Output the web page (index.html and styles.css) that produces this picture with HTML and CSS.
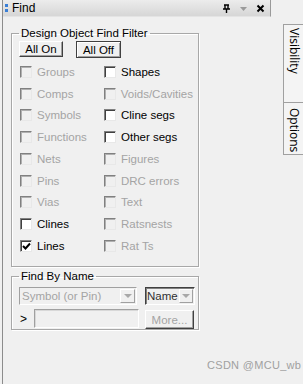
FILE: index.html
```html
<!DOCTYPE html>
<html lang="en">
<head>
    <meta charset="UTF-8">
    <title>Find</title>
    <link rel="stylesheet" href="styles.css">
</head>
<body>

    <div class="window">

        <!-- Find panel -->
        <div class="panel">

            <div class="titlebar">
                <span class="dots"><i></i><i></i></span>
                <span class="title">Find</span>
                <span class="tools">
                    <svg width="9" height="9" viewBox="0 0 9 9"><path d="M2 1h5M3 1v4M6 1v4M1 5h7M4.5 5v4" stroke="#000" stroke-width="1.4" fill="none"/></svg>
                    <svg width="9" height="9" viewBox="0 0 9 9"><path d="M1 3h7L4.5 7z" fill="#9a9a9a"/></svg>
                    <svg width="9" height="9" viewBox="0 0 9 9"><path d="M1.5 1.5l6 6M7.5 1.5l-6 6" stroke="#000" stroke-width="2"/></svg>
                </span>
            </div>

            <fieldset class="group filter">
                <legend>Design Object Find Filter</legend>

                <div class="buttons">
                    <button class="btn">All On</button>
                    <button class="btn pressed">All Off</button>
                </div>

                <div class="checks">
                    <label class="check off"><span class="box"></span>Groups</label>
                    <label class="check"><span class="box"></span>Shapes</label>
                    <label class="check off"><span class="box"></span>Comps</label>
                    <label class="check off"><span class="box"></span>Voids/Cavities</label>
                    <label class="check off"><span class="box"></span>Symbols</label>
                    <label class="check"><span class="box"></span>Cline segs</label>
                    <label class="check off"><span class="box"></span>Functions</label>
                    <label class="check"><span class="box"></span>Other segs</label>
                    <label class="check off"><span class="box"></span>Nets</label>
                    <label class="check off"><span class="box"></span>Figures</label>
                    <label class="check off"><span class="box"></span>Pins</label>
                    <label class="check off"><span class="box"></span>DRC errors</label>
                    <label class="check off"><span class="box"></span>Vias</label>
                    <label class="check off"><span class="box"></span>Text</label>
                    <label class="check"><span class="box"></span>Clines</label>
                    <label class="check off"><span class="box"></span>Ratsnests</label>
                    <label class="check"><span class="box ticked"><svg width="9" height="9" viewBox="0 0 9 9"><path d="M1 4l2.5 2.5L8 1.5" stroke="#000" stroke-width="2" fill="none"/></svg></span>Lines</label>
                    <label class="check off"><span class="box"></span>Rat Ts</label>
                </div>
            </fieldset>

            <fieldset class="group byname">
                <legend>Find By Name</legend>

                <div class="row">
                    <div class="combo wide">
                        <span class="value">Symbol (or Pin)</span>
                        <span class="arrow"></span>
                    </div>
                    <div class="combo narrow active">
                        <span class="value">Name</span>
                        <span class="arrow"></span>
                    </div>
                </div>

                <div class="row">
                    <span class="prompt">&gt;</span>
                    <div class="entry"></div>
                    <button class="btn more">More...</button>
                </div>
            </fieldset>

        </div>

        <!-- Side tabs -->
        <div class="tabs">
            <div class="tab visibility">Visibility</div>
            <div class="tab options">Options</div>
        </div>

    </div>

    <div class="watermark">CSDN @MCU_wb</div>

</body>
</html>
```

FILE: styles.css
```css
/* General look of the Find panel */

body {
    margin: 0;
    background-color: #f0f0f0;
    font-family: "Liberation Sans", Arial, sans-serif;
    font-size: 11px;
    color: #000;
    width: 303px;
    height: 384px;
    overflow: hidden;
    position: relative;
}

.window {
    display: flex;
    height: 384px;
}

.panel {
    width: 269px;
    margin-left: 2px;
    border-left: 1px solid #8c8c8c;
    display: flex;
    flex-direction: column;
}

/* Title bar */

.titlebar {
    height: 17px;
    display: flex;
    align-items: center;
    background: linear-gradient(#ececec, #d6d6d6);
    border-right: 1px solid #9a9a9a;
    border-bottom: 1px solid #e4e4e4;
    box-sizing: border-box;
}

.dots {
    display: flex;
    flex-direction: column;
    gap: 2px;
    margin-left: 2px;
    width: 4px;
}

.dots i {
    display: block;
    width: 3px;
    height: 3px;
    background-color: #3a7fd6;
}

.title {
    margin-left: 3px;
    font-size: 12px;
}

.tools {
    margin-left: auto;
    margin-right: 5px;
    display: flex;
    gap: 8px;
    align-items: center;
}

.tools svg {
    display: block;
}

/* Group boxes */

.group {
    margin: 10px 0 0 8px;
    width: 188px;
    box-sizing: border-box;
    border: 1px solid #a8a8a8;
    box-shadow: inset 1px 1px 0 #fff, 1px 1px 0 #fff;
    padding: 1px 0 0 7px;
}

.group legend {
    padding: 0 2px;
    margin-left: 0;
    font-size: 11.5px;
    line-height: 13px;
}

.filter {
    height: 240px;
}

.byname {
    margin-top: 3px;
    height: 60px;
}

/* Buttons */

.buttons {
    display: flex;
    gap: 13px;
}

.btn {
    font-family: "Liberation Sans", Arial, sans-serif;
    font-size: 11.5px;
    height: 16px;
    padding: 0;
    color: #000;
    background-color: #f0f0f0;
    border: 1px solid;
    border-color: #fff #404040 #404040 #fff;
    box-shadow: inset -1px -1px 0 #a0a0a0;
    line-height: 12px;
}

.buttons .btn {
    width: 44px;
}

.btn.pressed {
    width: 45px;
    height: 17px;
    border-color: #404040;
    box-shadow: inset 1px 1px 0 #fff, inset -1px -1px 0 #a0a0a0;
}

/* Checkbox grid */

.checks {
    margin-top: 3px;
    display: grid;
    grid-template-columns: 84px 90px;
    grid-auto-rows: 21.75px;
}

.check {
    display: flex;
    align-items: center;
    padding-left: 1px;
    font-size: 11.5px;
}

.check.off {
    color: #a4a4a4;
}

.box {
    width: 12px;
    height: 12px;
    box-sizing: border-box;
    margin-right: 5px;
    background-color: #fff;
    border: 1px solid;
    border-color: #808080 #e8e8e8 #e8e8e8 #808080;
    box-shadow: inset 1px 1px 0 #404040;
    display: flex;
    align-items: center;
    justify-content: center;
}

.check.off .box {
    background-color: #f0f0f0;
    box-shadow: inset 1px 1px 0 #b0b0b0;
}

.box svg {
    display: block;
    margin: 1px 0 0 1px;
}

/* Find by name rows */

.byname .row {
    display: flex;
    align-items: center;
    margin-top: 3px;
}

.combo {
    height: 18px;
    box-sizing: border-box;
    display: flex;
    align-items: center;
    border: 1px solid;
    border-color: #a0a0a0 #fff #fff #a0a0a0;
    background-color: #f0f0f0;
    font-size: 11.5px;
}

.combo.wide {
    width: 118px;
    color: #a4a4a4;
}

.combo.narrow {
    width: 50px;
    margin-left: 8px;
    color: #303030;
}

.combo.active {
    border-color: #404040 #fff #fff #404040;
    box-shadow: inset 1px 1px 0 #808080;
}

.combo .value {
    flex: 1;
    padding-left: 2px;
    white-space: nowrap;
}

.combo.narrow .value {
    padding-left: 1px;
}

.combo .arrow {
    flex: none;
    width: 15px;
    height: 14px;
    margin-right: 1px;
    background-color: #f0f0f0;
    border: 1px solid;
    border-color: #fff #a0a0a0 #a0a0a0 #fff;
    box-sizing: border-box;
    position: relative;
}

.combo.narrow .arrow {
    width: 14px;
}

.combo .arrow::after {
    content: "";
    position: absolute;
    left: 3px;
    top: 4px;
    border-left: 4px solid transparent;
    border-right: 4px solid transparent;
    border-top: 4px solid #a8a8a8;
}

.combo.narrow .arrow::after {
    left: 2px;
}

.prompt {
    width: 14px;
    font-size: 12px;
    padding-left: 1px;
}

.entry {
    width: 105px;
    height: 19px;
    box-sizing: border-box;
    border: 1px solid;
    border-color: #a0a0a0 #fff #fff #a0a0a0;
    box-shadow: inset 1px 1px 0 #d8d8d8;
}

.btn.more {
    width: 49px;
    height: 19px;
    margin-left: 6px;
    margin-top: 2px;
    color: #a4a4a4;
}

/* Side tabs */

.tabs {
    margin-left: 12px;
    padding-top: 24px;
    display: flex;
    flex-direction: column;
}

.tab {
    width: 20px;
    box-sizing: border-box;
    writing-mode: vertical-rl;
    font-family: "Open Sans", sans-serif;
    font-size: 12px;
    background-color: #f4f4f4;
    border: 1px solid #a0a0a0;
    border-right: none;
    padding-top: 3px;
    line-height: 18px;
}

.tab.visibility {
    height: 79px;
}

.tab.options {
    height: 53px;
    margin-top: -1px;
    padding-top: 5px;
}

/* Watermark overlay */

.watermark {
    position: absolute;
    left: 207px;
    top: 359px;
    font-size: 11px;
    letter-spacing: 0.3px;
    color: #a0a0a0;
}
```
